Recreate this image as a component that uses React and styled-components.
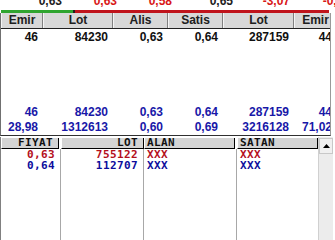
import React from "react";
import styled, { createGlobalStyle } from "styled-components";

const Global = createGlobalStyle`
  html, body { margin: 0; padding: 0; background: #ffffff; }
  body { font-family: "Liberation Sans", Arial, sans-serif; }
`;

const Frame = styled.div`
  width: 335px;
  height: 240px;
  overflow: hidden;
  background: #ffffff;
  display: flex;
  flex-direction: column;
`;

const Ticker = styled.div`
  display: grid;
  grid-template-columns: 62px 55px 55px 61px 57px 60px;
  height: 15px;
  margin-top: -5px;
  font-size: 12px;
  font-weight: bold;
  line-height: 12px;
`;

const TickCell = styled.div`
  text-align: right;
  color: ${(p) => (p.$red ? "#d81818" : "#202020")};
  white-space: nowrap;
`;

const Bar = styled.div`
  display: flex;
  height: 3px;
  margin: 0 6px 0 1px;
`;

const BarPart = styled.div`
  width: ${(p) => (p.$w ? `${p.$w}px` : "auto")};
  flex: ${(p) => (p.$w ? "none" : "1")};
  background: ${(p) => p.$c};
`;

const MainPanel = styled.div`
  width: 329px;
  height: 122px;
  border-left: 1px solid #707070;
  border-right: 1px solid #9a9a9a;
  border-bottom: 1px solid #303030;
  display: flex;
  flex-direction: column;
  overflow: hidden;
  background: #fff;
`;

const cols = "42px 70px 55px 55px 71px 43px";

const HeaderRow = styled.div`
  display: grid;
  grid-template-columns: ${cols};
  height: 15px;
  border-bottom: 1px solid #202020;
`;

const HeadCell = styled.div`
  background: #d8d8d8;
  border-right: 1px solid #808080;
  border-left: 1px solid #f4f4f4;
  font-size: 12px;
  font-weight: bold;
  line-height: 15px;
  text-align: center;
  color: #202020;
  white-space: nowrap;
`;

const DataRow = styled.div`
  display: grid;
  grid-template-columns: ${cols};
  height: 15px;
  font-size: 12px;
  font-weight: bold;
  line-height: 15px;
  color: ${(p) => p.$color};
  margin-top: ${(p) => p.$top || 0}px;
`;

const DataCell = styled.div`
  text-align: right;
  padding-right: 5px;
  white-space: nowrap;
`;

const Spacer = styled.div`
  flex: 1;
`;

const Bottom = styled.div`
  flex: 1;
  display: flex;
  border-left: 1px solid #808080;
  margin-top: 1px;
`;

const Grid = styled.div`
  flex: 1;
  display: grid;
  grid-template-columns: 60px 83px 93px 81px;
  grid-template-rows: 11px 11px 11px 1fr;
  font-family: "DejaVu Sans Mono", "Liberation Mono", monospace;
  font-size: 11px;
  font-weight: bold;
  letter-spacing: 0.4px;
  padding-top: 1px;
`;

const BHead = styled.div`
  grid-row: 1;
  background: #d4d4d4;
  border-bottom: 1px solid #000;
  border-right: 1px solid #000;
  border-left: 1px solid #ffffff;
  margin-right: ${(p) => (p.$gap ? 2 : 0)}px;
  line-height: 10px;
  color: #101010;
  text-align: ${(p) => p.$align};
  padding: ${(p) => (p.$align === "right" ? "0 5px 0 0" : "0 0 0 2px")};
`;

const BCell = styled.div`
  grid-row: ${(p) => p.$row};
  grid-column: ${(p) => p.$col};
  text-align: ${(p) => p.$align};
  color: ${(p) => p.$color};
  line-height: 11px;
  padding: ${(p) => (p.$align === "right" ? "0 6px 0 0" : "0 0 0 3px")};
`;

const ColLine = styled.div`
  grid-row: 2 / 5;
  grid-column: ${(p) => p.$col};
  border-right: 1px solid #a8a8a8;
`;

const Scroll = styled.div`
  width: 15px;
  margin-right: 2px;
  padding-top: 1px;
  display: flex;
  flex-direction: column;
  background: #ececec;
  border-left: 1px solid #d0d0d0;
`;

const ScrollBtn = styled.div`
  height: 14px;
  background: #f0f0f0;
  border: 1px solid #c8c8c8;
  display: flex;
  align-items: center;
  justify-content: center;
`;

const BLUE = "#1818a8";
const BRED = "#b4101c";
const BBLUE = "#0c0c9c";

export default function App() {
  const ticker = [
    ["0,63", false],
    ["0,63", true],
    ["0,58", true],
    ["0,65", false],
    ["-3,07", true],
    ["-0,02", true],
  ];
  const heads = ["Emir", "Lot", "Alis", "Satis", "Lot", "Emir"];
  const row1 = ["46", "84230", "0,63", "0,64", "287159", "44"];
  const row2 = ["46", "84230", "0,63", "0,64", "287159", "44"];
  const row3 = ["28,98", "1312613", "0,60", "0,69", "3216128", "71,02"];
  return (
    <>
      <Global />
      <Frame>
        <Ticker>
          {ticker.map(([t, r], i) => (
            <TickCell key={i} $red={r}>
              {t}
            </TickCell>
          ))}
        </Ticker>
        <Bar>
          <BarPart $w={72} $c="#2fa52f" />
          <BarPart $w={2} $c="#202020" />
          <BarPart $c="#c0141c" />
        </Bar>
        <MainPanel>
          <HeaderRow>
            {heads.map((h, i) => (
              <HeadCell key={i}>{h}</HeadCell>
            ))}
          </HeaderRow>
          <DataRow $color="#101010" $top={1}>
            {row1.map((v, i) => (
              <DataCell key={i}>{v}</DataCell>
            ))}
          </DataRow>
          <Spacer />
          <DataRow $color={BLUE}>
            {row2.map((v, i) => (
              <DataCell key={i}>{v}</DataCell>
            ))}
          </DataRow>
          <DataRow $color={BLUE}>
            {row3.map((v, i) => (
              <DataCell key={i}>{v}</DataCell>
            ))}
          </DataRow>
        </MainPanel>
        <Bottom>
          <Grid>
            <BHead $align="right" $gap>FIYAT</BHead>
            <BHead $align="right">LOT</BHead>
            <BHead $align="left" $gap>ALAN</BHead>
            <BHead $align="left">SATAN</BHead>
            <ColLine $col={1} />
            <ColLine $col={2} />
            <ColLine $col={3} />
            <BCell $row={2} $col={1} $align="right" $color={BRED}>0,63</BCell>
            <BCell $row={2} $col={2} $align="right" $color={BRED}>755122</BCell>
            <BCell $row={2} $col={3} $align="left" $color={BRED}>XXX</BCell>
            <BCell $row={2} $col={4} $align="left" $color={BRED}>XXX</BCell>
            <BCell $row={3} $col={1} $align="right" $color={BBLUE}>0,64</BCell>
            <BCell $row={3} $col={2} $align="right" $color={BBLUE}>112707</BCell>
            <BCell $row={3} $col={3} $align="left" $color={BBLUE}>XXX</BCell>
            <BCell $row={3} $col={4} $align="left" $color={BBLUE}>XXX</BCell>
          </Grid>
          <Scroll>
            <ScrollBtn>
              <svg width="7" height="4" viewBox="0 0 7 4">
                <path d="M3.5 0 L7 4 L0 4 Z" fill="#000" />
              </svg>
            </ScrollBtn>
          </Scroll>
        </Bottom>
      </Frame>
    </>
  );
}
